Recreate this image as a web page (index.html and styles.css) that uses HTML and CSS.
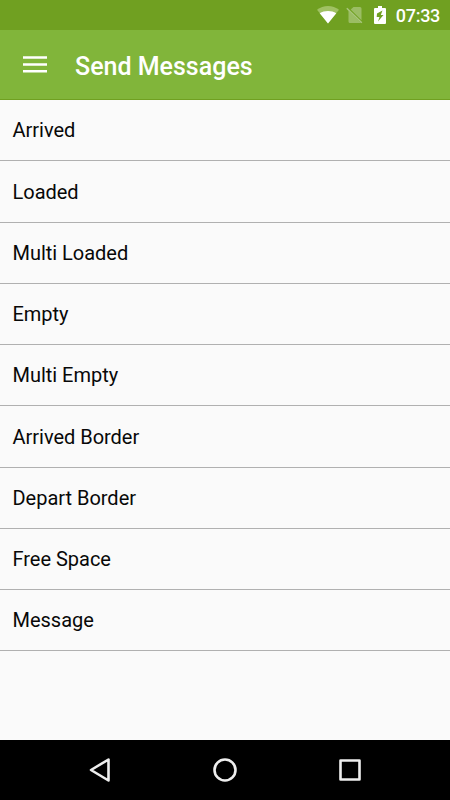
FILE: index.html
```html
<!DOCTYPE html>
<html lang="en">
<head>
<meta charset="utf-8">
<title>Send Messages</title>
<link rel="stylesheet" href="styles.css">
</head>
<body>
<div class="status">
  <svg class="wifi" width="22" height="18" viewBox="0 0 22 18"><path d="M11 17.500L0 3.800C3 1.400 7 0 11 0s8 1.400 11 3.800z" fill="#a0c163"/><path d="M11 17.500L2.700 7.200C5 5.700 8 5 11 5s6 .7 8.300 2.200z" fill="#fff"/></svg>
  <svg class="sim" width="18" height="18" viewBox="0 0 18 18"><path d="M7.500 1H14q1.500 0 1.500 1.500V14.200L4.700 3.600zM2.500 4.500L15 17H4q-1.500 0-1.500-1.500z" fill="#9bbd64"/><path d="M.8 2.300l15 14.500" stroke="#a9c67d" stroke-width="1.500"/></svg>
  <svg class="battery" width="12" height="18" viewBox="0 0 12 18"><path d="M4 0h4v2h3q1 0 1 1v14q0 1-1 1H1q-1 0-1-1V3q0-1 1-1h3z" fill="#fff"/><path d="M8.500 4.500L3 7.500l-.3 3.500H5.500L4 15.500 9.500 9H6.800z" fill="#70a021"/></svg>
  <span class="time">07:33</span>
</div>
<header class="bar">
  <svg class="menu" width="24" height="17" viewBox="0 0 24 17"><path d="M0 1.500h24M0 8.500h24M0 15.300h24" stroke="#fff" stroke-width="2.500"/></svg>
  <h1>Send Messages</h1>
</header>
<ul class="list">
  <li>Arrived</li><li>Loaded</li><li>Multi Loaded</li><li>Empty</li><li>Multi Empty</li><li>Arrived Border</li><li>Depart Border</li><li>Free Space</li><li>Message</li>
</ul>
<nav class="nav">
  <svg width="26" height="26" viewBox="0 0 26 26"><path d="M21.500 2.500v21L4 13z"/></svg>
  <svg width="26" height="26" viewBox="0 0 26 26"><circle cx="13" cy="13" r="10.500"/></svg>
  <svg width="26" height="26" viewBox="0 0 26 26"><rect x="3.500" y="3.500" width="19" height="19"/></svg>
</nav>
</body>
</html>
```
FILE: styles.css
```css
*{box-sizing:border-box}
body{margin:0;width:450px;height:800px;overflow:hidden;display:flex;flex-direction:column;background:#fafafa;font-family:Roboto,sans-serif;color:#080808}
.status{height:30px;background:#70a021;display:flex;align-items:center;justify-content:flex-end;padding-right:10px;color:#fff}
.sim{margin-left:7px}
.battery{margin-left:10px}
.time{font-size:18px;font-weight:500;letter-spacing:-.3px;margin-left:9.500px;line-height:30px;padding-top:1px}
.bar{height:70px;background:#81b53a;border-bottom:1px solid #70a021;display:flex;align-items:center;padding-left:23px;color:#fff}
h1{margin:0 0 0 28px;font-size:25px;font-weight:500;line-height:66px;padding-top:4px}
.list{list-style:none;margin:0;padding:0;flex:1}
.list li{height:61.25px;padding-left:12.500px;font-size:20px;line-height:61px;padding-top:.4px;letter-spacing:-.02px;border-bottom:1px solid #b0b0b0}
.nav{height:60px;background:#000;display:flex;align-items:center;justify-content:center;gap:99px}
.nav svg{fill:none;stroke:#eee;stroke-width:2.600;stroke-linejoin:round}
```
